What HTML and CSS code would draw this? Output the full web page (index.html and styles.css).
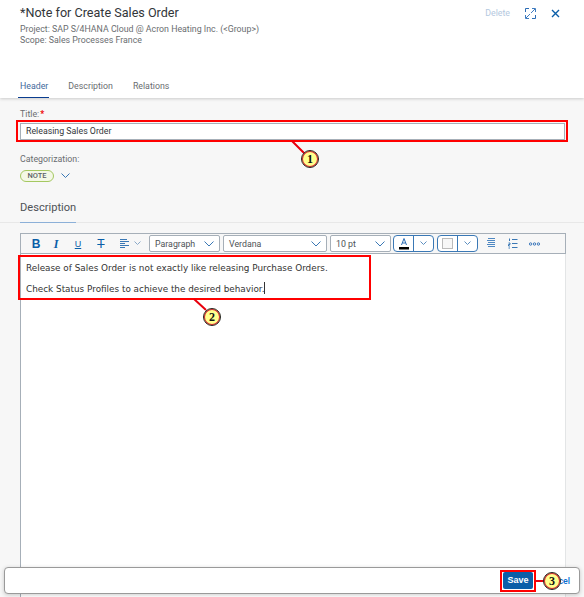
FILE: index.html
```html
<!DOCTYPE html>
<html>
	<head>
		<meta charset="utf-8">
		<title>Note for Create Sales Order</title>
		<link rel="stylesheet" href="styles.css">
	</head>
	<body>
		<header class="header">
			<div class="headTop">
				<div class="headText">
					<h1>*Note for Create Sales Order</h1>
					<p>Project: SAP S/4HANA Cloud @ Acron Heating Inc. (&lt;Group&gt;)</p>
					<p>Scope: Sales Processes France</p>
				</div>
				<div class="headActions">
					<span class="deleteBtn">Delete</span>
					<svg class="expandIcon" width="11" height="11" viewBox="0 0 11 11">
						<path d="M.5 4V.5H4M10.500 7V10.500H7" fill="none" stroke="#2b6cb5"/>
						<path d="M6 5L10 1M7 .5H10.500V4M5 6L1 10M.5 7V10.500H4" fill="none" stroke="#3f7cc0"/>
					</svg>
					<svg class="closeIcon" width="9" height="9" viewBox="0 0 9 9">
						<path d="M1 1L8 8M8 1L1 8" stroke="#0a5ea8" stroke-width="1.400"/>
					</svg>
				</div>
			</div>
			<nav class="tabs">
				<span class="tab tabActive">Header</span>
				<span class="tab">Description</span>
				<span class="tab">Relations</span>
			</nav>
		</header>

		<main class="content">
			<label class="fieldLabel">Title:<span class="req">*</span></label>
			<div class="titleInput">Releasing Sales Order</div>
			<label class="fieldLabel catLabel">Categorization:</label>
			<div class="catRow">
				<span class="noteTag">NOTE</span>
				<svg width="9" height="5" viewBox="0 0 9 5"><path d="M.5 .5L4.500 4.500L8.500 .5" fill="none" stroke="#3a78b5"/></svg>
			</div>

			<div class="sectionHead"><span class="sectionTitle">Description</span></div>

			<div class="editor">
				<div class="toolbar">
					<span class="tool toolB">B</span>
					<span class="tool toolI">I</span>
					<span class="tool toolU">U</span>
					<span class="tool toolS">T</span>
					<span class="alignTool">
						<svg width="11" height="11" viewBox="0 0 11 11"><path d="M1 1.500H8M1 3.500H10M1 5.500H6M1 7.500H10M1 9.500H6" stroke="#3a78b5"/></svg>
						<svg width="7" height="5" viewBox="0 0 7 5"><path d="M.5 .5L3.500 3.500L6.500 .5" fill="none" stroke="#8aa9c8"/></svg>
					</span>
					<span class="select selPara">Paragraph<svg width="10" height="6" viewBox="0 0 10 6"><path d="M.5 .5L5 5L9.500 .5" fill="none" stroke="#3a78b5"/></svg></span>
					<span class="select selFont">Verdana<svg width="10" height="6" viewBox="0 0 10 6"><path d="M.5 .5L5 5L9.500 .5" fill="none" stroke="#3a78b5"/></svg></span>
					<span class="select selSize">10 pt<svg width="10" height="6" viewBox="0 0 10 6"><path d="M.5 .5L5 5L9.500 .5" fill="none" stroke="#3a78b5"/></svg></span>
					<span class="split">
						<span class="splitMain"><svg width="12" height="14" viewBox="0 0 12 14"><path d="M3.500 8L6 1.500L8.500 8M4.500 6H7.500" fill="none" stroke="#2b6cb5"/><rect x="1" y="10" width="10" height="2.500" fill="#000"/></svg></span>
						<span class="splitArrow"><svg width="7" height="5" viewBox="0 0 7 5"><path d="M.5 .5L3.500 3.500L6.500 .5" fill="none" stroke="#5d8fc0"/></svg></span>
					</span>
					<span class="split">
						<span class="splitMain"><span class="swatch"></span></span>
						<span class="splitArrow"><svg width="7" height="5" viewBox="0 0 7 5"><path d="M.5 .5L3.500 3.500L6.500 .5" fill="none" stroke="#5d8fc0"/></svg></span>
					</span>
					<svg class="listIcon" width="10" height="11" viewBox="0 0 10 11"><path d="M2 .5H9M1 2.500H9M2 4.500H9M1 6.500H9M2 8.500H9" stroke="#4f88c2"/></svg>
					<svg class="numIcon" width="10" height="11" viewBox="0 0 10 11"><path d="M1.500 .5V3M.5 5H2V6.500H.5V8H2M.5 10H2M4 1.500H9.500M4 5.500H9.500M4 9.500H9.500" fill="none" stroke="#3a78b5"/></svg>
					<svg class="moreIcon" width="11" height="4" viewBox="0 0 11 4"><circle cx="1.600" cy="2" r="1.200" fill="none" stroke="#2b6cb5" stroke-width=".9"/><circle cx="5.500" cy="2" r="1.200" fill="none" stroke="#2b6cb5" stroke-width=".9"/><circle cx="9.400" cy="2" r="1.200" fill="none" stroke="#2b6cb5" stroke-width=".9"/></svg>
				</div>
				<div class="editorBody">
					<p>Release of Sales Order is not exactly like releasing Purchase Orders.</p>
					<p>Check Status Profiles to achieve the desired behavior.<span class="caret"></span></p>
				</div>
			</div>
		</main>

		<footer class="footer">
			<span class="saveBtn">Save</span>
			<span class="cancelBtn">Cancel</span>
		</footer>

		<!-- tutorial annotations drawn over the screenshot -->
		<div class="mark markTitle"></div>
		<div class="mark markBody"></div>
		<div class="mark markSave"></div>
		<svg class="leaders" width="584" height="597">
			<path d="M292 141L304 153M194 299L206 310M535 581H545" stroke="#e8000d" stroke-width="2" fill="none"/>
		</svg>
		<span class="callout call1">1</span>
		<span class="callout call2">2</span>
		<span class="callout call3">3</span>
	</body>
</html>
```

FILE: styles.css
```css
* { box-sizing:border-box; }
html, body { height:100%; }
body {
	margin:0;
	background:#f7f7f7;
	font-family:Roboto, "Liberation Sans", sans-serif;
	color:#32363a;
	overflow:hidden;
	position:relative;
	display:flex;
	flex-direction:column;
}

.header {
	background:#fff;
	height:98px;
	flex:none;
	padding:5px 20px 0;
	box-shadow:0 1px 3px rgba(0,0,0,.18);
	display:flex;
	flex-direction:column;
	justify-content:space-between;
}
.headTop { display:flex; justify-content:space-between; }
.headText h1 { margin:0 0 3px; font-size:12.600px; line-height:16px; font-weight:400; color:#32363a; }
.headText p { margin:0; font-size:8.800px; line-height:11px; color:#6a6d70; }
.headActions { display:flex; align-items:center; height:16px; margin-right:4px; }
.deleteBtn { font-size:8.800px; color:#b4c8e0; margin-right:15px; }
.closeIcon { margin-left:15px; }

.tabs { display:flex; gap:20px; }
.tab { font-size:8.800px; line-height:12px; color:#6a6d70; padding-bottom:6px; }
.tabActive { color:#3f6a9c; position:relative; }
.tabActive::after { content:""; position:absolute; left:-2px; right:-1px; bottom:0; height:1px; background:#0a3d8f; }

.content { flex:1; min-height:0; padding:10px 0 0; display:flex; flex-direction:column; }
.fieldLabel { display:block; margin:0 20px; font-size:8.800px; line-height:12px; color:#6a6d70; }
.req { color:#e00; margin-left:1px; font-weight:700; }
.titleInput {
	margin:3px 19px 0 20px;
	height:17px;
	background:#fff;
	border:1px solid #a6afb8;
	font-size:8.800px;
	line-height:15px;
	padding-left:5px;
	color:#32363a;
}
.catLabel { margin-top:13px; }
.catRow { margin:4px 20px 0; display:flex; align-items:center; gap:7px; height:13px; }
.noteTag {
	height:12px;
	width:34px;
	border:1px solid #a5c861;
	border-radius:7px;
	background:#f4f8e6;
	text-align:center;
	font-size:7.500px;
	line-height:10px;
	font-weight:500;
	color:#5c6266;
}

.sectionHead { margin-top:8px; height:33px; border-bottom:1px solid #e8e8e8; padding:6px 20px 0; flex:none; position:relative; }
.sectionTitle { font-size:11.100px; line-height:14px; color:#4e5256; }
.sectionHead::after { content:""; position:absolute; left:20px; bottom:-1px; width:56px; height:1px; background:#8cb0d8; }

.editor { margin:10px 18px 0 20px; flex:1; min-height:0; display:flex; flex-direction:column; background:#fff; border-left:1px solid #a6afb8; border-right:1px solid #e3e5e6; }
.toolbar {
	height:21px;
	flex:none;
	background:#f7f7f7;
	border:1px solid #a6afb8;
	border-left:0;
	display:flex;
	align-items:center;
	padding-left:10px;
	margin-right:-1px;
}
.tool { width:10px; text-align:center; color:#0a5ea8; font-size:11px; line-height:14px; margin-right:13px; font-family:"Liberation Sans", sans-serif; }
.toolB { font-weight:700; font-size:12px; margin-right:10px; }
.toolI { font-style:italic; font-family:"Liberation Serif", serif; font-weight:700; font-size:12px; margin-right:12px; }
.toolU { text-decoration:underline; font-size:9px; }
.toolS { text-decoration:line-through; font-size:12px; }
.alignTool { display:flex; align-items:center; gap:4px; margin-right:8px; }
.select {
	height:17px;
	background:#fff;
	border:1px solid #a6afb8;
	border-radius:2px;
	font-size:8.800px;
	color:#4e5256;
	padding:0 5px;
	display:flex;
	align-items:center;
	justify-content:space-between;
	margin-right:3px;
}
.selPara { width:71px; }
.selFont { width:104px; }
.selSize { width:61px; margin-right:2px; }
.split { display:flex; height:17px; border:1px solid #3a78b5; border-radius:4px; background:#fff; margin-right:3px; overflow:hidden; }
.splitMain { width:20px; display:flex; align-items:center; justify-content:center; border-right:1px solid #3a78b5; }
.splitArrow { width:19px; display:flex; align-items:center; justify-content:center; }
.swatch { width:11px; height:11px; border:1px solid #bbb; background:#f7f7f7; }
.listIcon { margin-left:5px; }
.numIcon { margin-left:12px; }
.moreIcon { margin-left:11px; }

.editorBody { flex:1; padding:9px 5px 0; font-family:"DejaVu Sans", Verdana, sans-serif; font-size:8.850px; color:#333; }
.editorBody p { margin:0 0 8px; line-height:11px; }
.caret { display:inline-block; width:1px; height:12px; background:#333; vertical-align:-2px; }

.footer {
	position:absolute;
	left:4px;
	top:567px;
	width:576px;
	height:27px;
	background:#fff;
	border:1px solid #9a9a9a;
	border-radius:4px;
	box-shadow:0 1px 4px rgba(0,0,0,.2);
	display:flex;
	align-items:center;
	justify-content:flex-end;
	padding-right:9px;
	gap:10px;
}
.saveBtn { width:30px; height:17px; background:#0a5ea8; border-radius:2px; color:#fff; font-size:9px; font-weight:700; line-height:17px; text-align:center; font-family:"Liberation Sans", sans-serif; }
.cancelBtn { font-size:8.800px; font-weight:500; color:#0a6ed1; width:27px; }

.mark { position:absolute; border:2px solid #f00; }
.markTitle { left:16px; top:120px; width:552px; height:22px; }
.markBody { left:18px; top:255px; width:353px; height:45px; }
.markSave { left:500px; top:570px; width:36px; height:22px; }
.leaders { position:absolute; left:0; top:0; }
.callout {
	position:absolute;
	width:18px;
	height:18px;
	border-radius:50%;
	border:1px solid #222;
	box-shadow:inset 0 0 0 1px #d23;
	background:#ffff8c;
	text-align:center;
	font-family:"Liberation Serif", serif;
	font-weight:700;
	font-size:12px;
	line-height:16px;
	color:#111;
}
.call1 { left:301px; top:150px; }
.call2 { left:203px; top:308px; }
.call3 { left:543px; top:572px; }
```
